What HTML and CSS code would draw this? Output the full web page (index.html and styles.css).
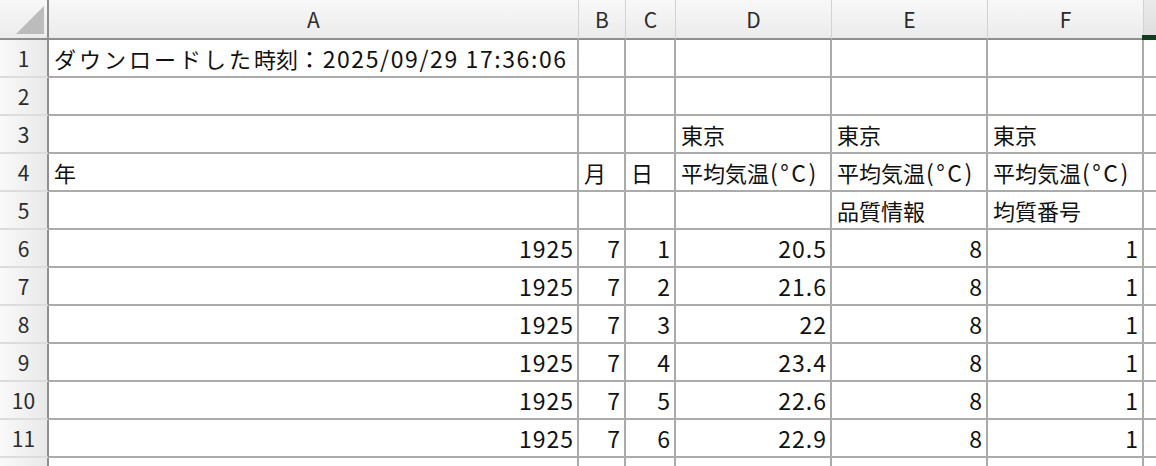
FILE: index.html
```html
<!DOCTYPE html>
<html lang="ja">
<head>
<meta charset="utf-8">
<link rel="stylesheet" href="styles.css">
</head>
<body>
<div class="sheet">
  <div class="corner"><svg width="47" height="38" viewBox="0 0 47 38"><polygon points="44,6 44,34 16,34" fill="#bcbcbc"/></svg></div>
  <div class="ch">A</div><div class="ch">B</div><div class="ch">C</div><div class="ch">D</div><div class="ch">E</div><div class="ch">F</div><div class="ch chg"></div>

  <div class="rh">1</div><div class="c l"><span class="kana">ダウンロードした</span>時刻<span class="stamp">：2025/09/29 17:36:06</span></div><div class="c"></div><div class="c"></div><div class="c"></div><div class="c"></div><div class="c"></div><div class="c g"></div>
  <div class="rh">2</div><div class="c"></div><div class="c"></div><div class="c"></div><div class="c"></div><div class="c"></div><div class="c"></div><div class="c g"></div>
  <div class="rh">3</div><div class="c"></div><div class="c"></div><div class="c"></div><div class="c l">東京</div><div class="c l">東京</div><div class="c l">東京</div><div class="c g"></div>
  <div class="rh">4</div><div class="c l">年</div><div class="c l">月</div><div class="c l">日</div><div class="c l">平均気温<span class="unit">(°C)</span></div><div class="c l">平均気温<span class="unit">(°C)</span></div><div class="c l">平均気温<span class="unit">(°C)</span></div><div class="c g"></div>
  <div class="rh">5</div><div class="c"></div><div class="c"></div><div class="c"></div><div class="c"></div><div class="c l">品質情報</div><div class="c l">均質番号</div><div class="c g"></div>
  <div class="rh">6</div><div class="c n">1925</div><div class="c n">7</div><div class="c n">1</div><div class="c n">20.5</div><div class="c n">8</div><div class="c n">1</div><div class="c g"></div>
  <div class="rh">7</div><div class="c n">1925</div><div class="c n">7</div><div class="c n">2</div><div class="c n">21.6</div><div class="c n">8</div><div class="c n">1</div><div class="c g"></div>
  <div class="rh">8</div><div class="c n">1925</div><div class="c n">7</div><div class="c n">3</div><div class="c n">22</div><div class="c n">8</div><div class="c n">1</div><div class="c g"></div>
  <div class="rh">9</div><div class="c n">1925</div><div class="c n">7</div><div class="c n">4</div><div class="c n">23.4</div><div class="c n">8</div><div class="c n">1</div><div class="c g"></div>
  <div class="rh">10</div><div class="c n">1925</div><div class="c n">7</div><div class="c n">5</div><div class="c n">22.6</div><div class="c n">8</div><div class="c n">1</div><div class="c g"></div>
  <div class="rh">11</div><div class="c n">1925</div><div class="c n">7</div><div class="c n">6</div><div class="c n">22.9</div><div class="c n">8</div><div class="c n">1</div><div class="c g"></div>
  <div class="rh">12</div><div class="c n">1925</div><div class="c n">7</div><div class="c n">7</div><div class="c n">23.1</div><div class="c n">8</div><div class="c n">1</div><div class="c g"></div>
</div>
</body>
</html>
```
FILE: styles.css
```css
html, body {
  margin: 0;
  padding: 0;
  background: #ffffff;
  overflow: hidden;
}
.sheet {
  display: grid;
  grid-template-columns: 49px 530px 47px 50px 156px 156px 156px 1fr;
  grid-template-rows: 40px repeat(12, 38px);
  width: 1156px;
  font-family: "Noto Sans CJK JP", "Noto Sans", sans-serif;
  font-size: 22px;
  color: #111111;
}
.corner {
  background: linear-gradient(#f7f7f7, #ececec);
  border-right: 2px solid #8f8f8f;
  border-bottom: 2px solid #8f8f8f;
  box-sizing: border-box;
}
.corner svg { display: block; }
.ch {
  box-sizing: border-box;
  background: linear-gradient(#f8f8f8, #ebebeb);
  border-bottom: 2px solid #8f8f8f;
  border-right: 1px solid #d2d2d2;
  display: flex;
  align-items: center;
  justify-content: center;
  font-size: 21px;
  color: #2b2b2b;
  padding-bottom: 1px;
}
.chg {
  position: relative;
  background: linear-gradient(#eaeaea, #dedede);
  border-right: none;
}
.chg::after {
  content: "";
  position: absolute;
  left: -2px;
  right: 0;
  bottom: -2px;
  height: 5px;
  background: #0e3d1f;
}
.rh {
  box-sizing: border-box;
  background: linear-gradient(90deg, #f9f9f9, #e9e9e9);
  border-right: 2px solid #8f8f8f;
  border-bottom: 2px solid #dcdcdc;
  display: flex;
  align-items: center;
  justify-content: center;
  font-size: 21px;
  color: #2b2b2b;
}
.c {
  box-sizing: border-box;
  border-right: 2px solid #ababab;
  border-bottom: 2px solid #ababab;
  display: flex;
  align-items: center;
  white-space: nowrap;
  overflow: visible;
  padding: 0 3px 0 5px;
}
.c.l { justify-content: flex-start; }
.c.n { justify-content: flex-end; font-size: 23px; letter-spacing: 1px; }
.c.g { border-right: none; }
.kana { letter-spacing: 3px; }
.stamp { letter-spacing: 1.6px; font-size: 23px; }
.unit { font-size: 23px; letter-spacing: 2.5px; margin-left: 1px; }
```
